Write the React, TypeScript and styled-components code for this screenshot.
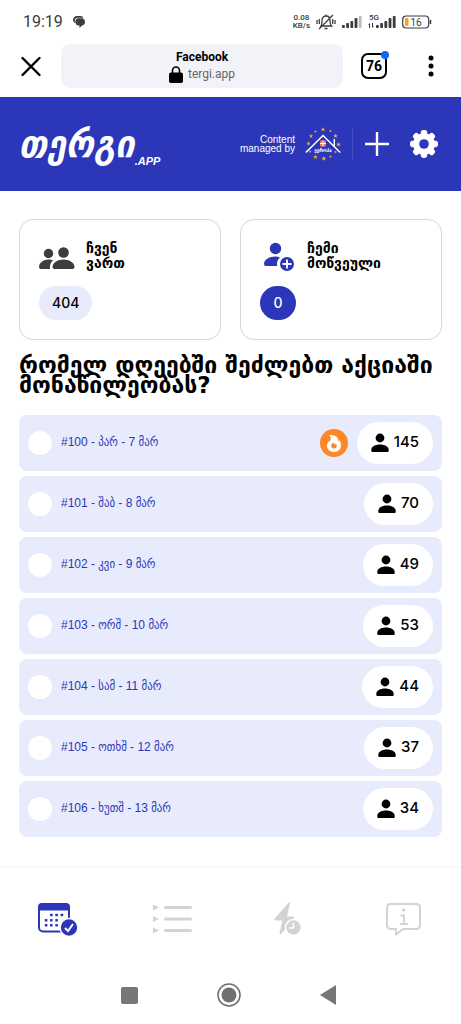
import React from "react";
import styled, { createGlobalStyle } from "styled-components";

const blue = "#2c36b8";
const pale = "#e8ebfc";
const sans = `Inter, "DejaVu Sans", sans-serif`;
const georgian = `"DejaVu Sans", sans-serif`;

const GlobalStyle = createGlobalStyle`
  * { box-sizing: border-box; }
  body { margin: 0; background: #fff; color: #000; font-family: ${sans}; }
  button { border: 0; padding: 0; margin: 0; background: none; font: inherit; color: inherit; cursor: pointer; }
  h1, h2, p, ul { margin: 0; padding: 0; font-weight: inherit; }
  svg { display: block; flex: none; }
`;

const Page = styled.div`
  display: flex;
  flex-direction: column;
  min-height: 100vh;
`;

const StatusBar = styled.div`
  display: flex;
  align-items: center;
  justify-content: space-between;
  height: 44px;
  padding: 0 29px 0 23px;
  color: #3c3c3c;
  font-family: Roboto, sans-serif;
`;

const StatusGroup = styled.div<{ $gap: number }>`
  display: flex;
  align-items: center;
  gap: ${(p) => p.$gap}px;
`;

const Clock = styled.time`
  font-size: 16px;
  line-height: 20px;
`;

const Speed = styled.div`
  font-size: 8px;
  line-height: 8px;
  font-weight: 500;
  text-align: center;
`;

const BrowserBar = styled.div`
  display: flex;
  align-items: center;
  height: 53px;
  padding: 0 23px 9px 20px;
`;

const Address = styled.button`
  display: flex;
  flex: 1;
  flex-direction: column;
  align-items: center;
  justify-content: center;
  height: 44px;
  margin: 0 18px 0 19px;
  border-radius: 9px;
  background: #f2f3f8;
  font-family: Roboto, sans-serif;
`;

const AddressTitle = styled.span`
  font-size: 12px;
  line-height: 16px;
  font-weight: 700;
`;

const AddressUrl = styled.span`
  display: flex;
  align-items: center;
  gap: 5px;
  color: #666;
  font-size: 12px;
  line-height: 18px;
`;

const TabCount = styled.button`
  position: relative;
  width: 26px;
  height: 26px;
  border: 2px solid #000;
  border-radius: 7px;
  font-family: Roboto, sans-serif;
  font-size: 14px;
  line-height: 22px;
  font-weight: 700;
`;

const TabDot = styled.span`
  position: absolute;
  top: -4px;
  right: -4px;
  width: 8px;
  height: 8px;
  border-radius: 50%;
  background: #1167f5;
`;

const MenuButton = styled.button`
  margin-left: auto;
`;

const BarEnd = styled.div`
  display: flex;
  align-items: center;
  width: 77px;
`;

const Header = styled.header`
  display: flex;
  align-items: center;
  justify-content: space-between;
  height: 94px;
  padding: 0 23px 0 19px;
  background: ${blue};
  color: #fff;
`;

const Logo = styled.a`
  display: flex;
  align-items: flex-end;
  color: #fff;
  text-decoration: none;
  font-style: italic;
  font-weight: 700;
`;

const LogoName = styled.span`
  font-family: "DejaVu Sans Condensed", "DejaVu Sans", sans-serif;
  font-size: 38px;
  line-height: 48px;
`;

const LogoSuffix = styled.span`
  font-family: "Liberation Sans", sans-serif;
  font-size: 11px;
  line-height: 14px;
`;

const HeaderTools = styled.div`
  display: flex;
  align-items: center;
`;

const Managed = styled.p`
  margin-right: 10px;
  font-family: "Liberation Sans", sans-serif;
  font-size: 10px;
  line-height: 9px;
  text-align: right;
`;

const Divider = styled.span`
  width: 1px;
  height: 32px;
  margin: 0 12px 0 11px;
  background: #4650c6;
`;

const SettingsButton = styled.button`
  margin-left: 21px;
`;

const Main = styled.main`
  flex: 1;
  padding: 28px 19px 30px;
`;

const Cards = styled.div`
  display: grid;
  grid-template-columns: 1fr 1fr;
  gap: 19px;
`;

const Card = styled.section`
  height: 121px;
  padding: 21px 19px;
  border: 1px solid #d6d6da;
  border-radius: 14px;
`;

const CardHead = styled.div`
  display: flex;
  align-items: center;
  gap: 11px;
  height: 32px;
  margin-bottom: 13px;
`;

const CardTitle = styled.h2`
  padding-bottom: 2px;
  font-family: ${georgian};
  font-size: 14px;
  line-height: 15px;
  font-weight: 700;
`;

const Pill = styled.span<{ $solid?: boolean }>`
  display: inline-flex;
  align-items: center;
  justify-content: center;
  min-width: 36px;
  height: 34px;
  padding: 0 13px 2px;
  border-radius: 17px;
  background: ${(p) => (p.$solid ? blue : pale)};
  color: ${(p) => (p.$solid ? "#fff" : "#000")};
  font-size: 14px;
  font-weight: 500;
`;

const Question = styled.h1`
  margin: 15px 0 20px;
  font-family: ${georgian};
  font-size: 23px;
  line-height: 20px;
  font-weight: 700;
`;

const Days = styled.ul`
  display: flex;
  flex-direction: column;
  gap: 5px;
  list-style: none;
`;

const Day = styled.li`
  display: flex;
  align-items: center;
  height: 56px;
  padding: 0 9px;
  border-radius: 8px;
  background: ${pale};
`;

const DayLabel = styled.label`
  display: flex;
  flex: 1;
  align-items: center;
  gap: 9px;
  color: ${blue};
  font-family: "Liberation Sans", "DejaVu Sans Condensed", "DejaVu Sans", sans-serif;
  font-size: 12px;
  line-height: 20px;
`;

const RowText = styled.span`
  padding-bottom: 3px;
`;

const DayCheck = styled.input`
  appearance: none;
  width: 24px;
  height: 24px;
  margin: 0;
  border-radius: 50%;
  background: #fff;
  &:checked { background: ${blue}; border: 5px solid #fff; }
`;

const Count = styled.span`
  display: flex;
  align-items: center;
  gap: 5px;
  height: 42px;
  margin-left: 9px;
  padding: 0 14px;
  border-radius: 21px;
  background: #fff;
  font-size: 15px;
  font-weight: 500;
`;

const Nav = styled.nav`
  display: grid;
  grid-template-columns: repeat(4, 1fr);
  place-items: center;
  height: 100px;
  padding-top: 2px;
  box-shadow: 0 0 3px #e6e6e6;
  clip-path: inset(-4px 0 0 0);
`;

const SystemBar = styled.div`
  display: flex;
  align-items: center;
  justify-content: center;
  gap: 79px;
  height: 56px;
  padding: 0 4px 2px 0;
`;

const PersonIcon = () => (
  <svg width="18" height="20" viewBox="0 0 18 20">
    <circle cx="9" cy="5" r="4.400" />
    <path d="M.3 18v-1.200c0-3.200 4-5.300 8.700-5.300s8.700 2.100 8.700 5.300V18q0 1-1 1H1.300q-1 0-1-1z" />
  </svg>
);

const FlameIcon = () => (
  <svg width="28" height="28" viewBox="0 0 28 28" role="img" aria-label="Hot">
    <circle cx="14" cy="14" r="14" fill="#fd8829" />
    <path fill="#fff" d="M9 6c4.300-.3 8.500 1 9.300 4.700l.2 1.500 1.200-.8c1.200 2.300 1.500 4.100 1.200 6.100-.5 3.600-3.500 5.500-6.900 5.500-4.200 0-7-2.600-7-6.200 0-2.900 1.800-4.600 3.600-5.600C11 9.200 10.500 7.400 9 6z" />
    <path fill="#fd8829" d="M13.600 13.500c.7 1.300.6 1.700 1.400 2.100.8-.4.600-1.200.7-1.400 1.300 1.500 1.500 3.100.6 4.300-1.100 1.500-3.500 1.500-4.600.1-1.300-1.900-.2-3.700 1.900-5.100z" />
  </svg>
);

const Signal = ({ faded }: { faded?: boolean }) => (
  <svg width="20" height="14" viewBox="0 0 20 14" fill="#3c3c3c">
    <rect x="0" y="10" width="2.800" height="3" rx=".8" />
    <rect x="4.200" y="8" width="2.800" height="5" rx=".8" />
    <rect x="8.400" y="6" width="2.800" height="7" rx=".8" />
    <rect x="12.600" y="3" width="2.800" height="10" rx=".8" />
    <rect x="16.800" y="1" width="2.800" height="12" rx=".8" fill={faded ? "#bbb" : "#3c3c3c"} />
  </svg>
);

const stars = [
  [18, 2.5, 1.1], [25.5, 4, 0.7], [30.5, 9, 1.1], [33.500, 17.500, 1.1], [30.500, 25, 0.7], [25.500, 29.500, 0.7],
  [18.800, 31.500, 1.2], [10.500, 30, 1.1], [5, 24.500, 0.7], [3.500, 16.500, 1], [6, 9, 1], [10.500, 4.500, 0.7],
];

const HouseBadge = () => (
  <svg width="36" height="34" viewBox="0 0 36 34" role="img" aria-label="ევროპული სახლი">
    {stars.map(([x, y, s], i) => (
      <path
        key={i}
        fill="#e8a83c"
        transform={`translate(${x} ${y}) scale(${s})`}
        d="M0-2.300.6-.7H2.200L.9.3 1.400 1.900 0 .9-1.400 1.900-.9.3-2.200-.7H-.6z"
      />
    ))}
    <path d="M.8 25.500 18 8.500l17.200 17M29.300 19v-7" fill="none" stroke="#fff" strokeWidth="1.500" />
    <rect x="15" y="13.500" width="6" height="6" fill="#e97652" />
    <path d="M18 13.500v6M15 16.500h6" stroke="#fff" strokeWidth="1" />
    <text x="18" y="25" textAnchor="middle" fill="#fff" fontFamily="DejaVu Sans Condensed, DejaVu Sans" fontSize="5" fontWeight="700">ევროპა</text>
  </svg>
);

const GearIcon = () => (
  <svg width="28" height="28" viewBox="0 0 28 28">
    <g fill="#fff">
      {[0, 45, 90, 135].map((a) => (
        <rect key={a} x="10.800" y="0" width="6.400" height="28" rx="2.400" transform={`rotate(${a} 14 14)`} />
      ))}
      <circle cx="14" cy="14" r="10.800" />
    </g>
    <circle cx="14" cy="14" r="4.800" fill={blue} />
  </svg>
);

const calendarDots = [
  [13, 12.7], [18.300, 12.7], [23.600, 12.7],
  [7.800, 18], [13, 18], [18.300, 18],
  [7.800, 23], [13, 23], [18.300, 23],
];

const days = [
  { id: 100, day: "პარ", date: 7, count: 145, hot: true },
  { id: 101, day: "შაბ", date: 8, count: 70 },
  { id: 102, day: "კვი", date: 9, count: 49 },
  { id: 103, day: "ორშ", date: 10, count: 53 },
  { id: 104, day: "სამ", date: 11, count: 44 },
  { id: 105, day: "ოთხშ", date: 12, count: 37 },
  { id: 106, day: "ხუთშ", date: 13, count: 34 },
];

export default function App() {
  return (
    <Page>
      <GlobalStyle />
      <StatusBar>
        <StatusGroup $gap={10}>
          <Clock>19:19</Clock>
          <svg width="12" height="12" viewBox="0 0 12 12" fill="#3c3c3c">
            <path d="M4 0h3.500C9 0 10 .8 10.500 1.800H5C2.700 1.800 1.800 3.200 1.800 5v2C.6 6.300 0 5.200 0 4c0-2.200 1.800-4 4-4z" />
            <path d="M5.500 2.300h3C10.600 2.300 12 4 12 5.900s-1.400 3.300-3 3.500L6.500 12V9.400h-1C3.700 9.400 2.300 8 2.300 6s1.400-3.700 3.200-3.700z" />
          </svg>
        </StatusGroup>
        <StatusGroup $gap={6}>
          <Speed>0.08<br />KB/s</Speed>
          <svg width="20" height="18" viewBox="0 0 20 18" fill="none" stroke="#3c3c3c" strokeWidth="1.300">
            <path d="M5 13h10.500c-1.400-1.300-1.500-3-1.500-5.500C14 4.800 12.500 3 10 3S6 4.800 6 7.500c0 2.500 0 4-1 5.500zM3 16 17 2M8.500 15.500h3M1 7v4M3.300 6v5M19 7v4M16.700 6v5M10 1.500V3" />
          </svg>
          <Signal faded />
          <svg width="28" height="18" viewBox="0 0 28 18" fill="#3c3c3c">
            <text x="1" y="7" fontFamily="Roboto, sans-serif" fontSize="8" fontWeight="500">5G</text>
            <path d="m0 12 2-2v5H1v-3zM5 10v3h1l-2 2v-5z" />
            <rect x="8" y="12" width="2.800" height="3" rx=".8" />
            <rect x="12.200" y="10" width="2.800" height="5" rx=".8" />
            <rect x="16.400" y="8" width="2.800" height="7" rx=".8" />
            <rect x="20.600" y="5" width="2.800" height="10" rx=".8" />
            <rect x="24.800" y="3" width="2.800" height="12" rx=".8" />
          </svg>
          <svg width="30" height="14" viewBox="0 0 30 14">
            <rect x=".7" y="1" width="26" height="12" rx="3.500" fill="none" stroke="#3c3c3c" strokeWidth="1.200" />
            <rect x="3" y="3" width="3.500" height="8" rx="1" fill="#f3a51f" />
            <path d="M28.500 5v4" stroke="#3c3c3c" strokeWidth="1.500" />
            <text x="8.500" y="10.500" fontFamily="Roboto, sans-serif" fontSize="10" fill="#3c3c3c">16</text>
          </svg>
        </StatusGroup>
      </StatusBar>

      <BrowserBar>
        <button aria-label="Close">
          <svg width="22" height="22" viewBox="0 0 22 22" stroke="#000" strokeWidth="2.400" strokeLinecap="round">
            <path d="m2.500 3 17 17m0-17-17 17" />
          </svg>
        </button>
        <Address>
          <AddressTitle>Facebook</AddressTitle>
          <AddressUrl>
            <svg width="14" height="17" viewBox="0 0 14 17">
              <path d="M3.500 8V4.500a3.500 3.500 0 0 1 7 0V8" fill="none" stroke="#000" strokeWidth="1.600" />
              <rect y="6.500" width="14" height="10.500" rx="2" />
            </svg>
            tergi.app
          </AddressUrl>
        </Address>
        <BarEnd>
          <TabCount>76<TabDot /></TabCount>
          <MenuButton aria-label="Menu">
            <svg width="14" height="24" viewBox="0 0 14 24">
              <circle cx="7" cy="4" r="2.500" /><circle cx="7" cy="12" r="2.500" /><circle cx="7" cy="20" r="2.500" />
            </svg>
          </MenuButton>
        </BarEnd>
      </BrowserBar>

      <Header>
        <Logo href="#">
          <LogoName>თერგი</LogoName>
          <LogoSuffix>.APP</LogoSuffix>
        </Logo>
        <HeaderTools>
          <Managed>Content<br />managed by</Managed>
          <HouseBadge />
          <Divider />
          <button aria-label="Add">
            <svg width="24" height="24" viewBox="0 0 24 24" stroke="#fff" strokeWidth="2.400">
              <path d="M12 0v24M0 12h24" />
            </svg>
          </button>
          <SettingsButton aria-label="Settings"><GearIcon /></SettingsButton>
        </HeaderTools>
      </Header>

      <Main>
        <Cards>
          <Card>
            <CardHead>
              <svg width="36" height="28" viewBox="0 0 36 28" fill="#3d3d3d">
                <circle cx="9.500" cy="10.500" r="4.700" />
                <path d="M14.500 17.200c-2.600 1.400-3.600 4-3.500 8.800H2q-2 0-2-2c0-4.300 4.500-7.500 9.500-7.500 2 0 3.500.200 5 .7z" />
                <circle cx="24.500" cy="9.500" r="5.300" />
                <path d="M24.500 16.500c6 0 11 3.300 11 7.500q0 2-2 2h-18q-2 0-2-2c0-4.200 5-7.500 11-7.500z" />
              </svg>
              <CardTitle>ჩვენ<br />ვართ</CardTitle>
            </CardHead>
            <Pill>404</Pill>
          </Card>
          <Card>
            <CardHead>
              <svg width="36" height="32" viewBox="0 0 36 32" fill={blue}>
                <circle cx="15.500" cy="7.500" r="5.700" />
                <path d="M20 16.700c-2.500 1.700-3.600 4.800-2.800 8.300H6q-2 0-2-2c0-4.300 5-7.500 11.500-7.500 1.700 0 3.200.3 4.500 1.200z" />
                <circle cx="27" cy="23" r="7" />
                <path d="M27 18.500v9M22.500 23h9" stroke="#fff" strokeWidth="1.800" />
              </svg>
              <CardTitle>ჩემი<br />მოწვეული</CardTitle>
            </CardHead>
            <Pill $solid>0</Pill>
          </Card>
        </Cards>

        <Question>რომელ დღეებში შეძლებთ აქციაში მონაწილეობას?</Question>

        <Days>
          {days.map((d) => (
            <Day key={d.id}>
              <DayLabel>
                <DayCheck type="checkbox" />
                <RowText>{`#${d.id} - ${d.day} - ${d.date} მარ`}</RowText>
              </DayLabel>
              {d.hot && <FlameIcon />}
              <Count><PersonIcon /><RowText>{d.count}</RowText></Count>
            </Day>
          ))}
        </Days>
      </Main>

      <Nav>
        <button aria-label="Calendar">
          <svg width="42" height="36" viewBox="0 0 42 36" fill={blue}>
            <rect x="2" y="3" width="30" height="27.500" rx="4" fill="none" stroke={blue} strokeWidth="2" />
            <path d="M1 9.500V6q0-4 4-4h24q4 0 4 4v3.500z" />
            {calendarDots.map(([x, y]) => (
              <rect key={`${x}-${y}`} x={x} y={y} width="2.600" height="2.600" rx=".6" />
            ))}
            <circle cx="32" cy="26.500" r="9" stroke="#fff" strokeWidth="1.600" />
            <path d="m28 27 3 3 5-7" fill="none" stroke="#fff" strokeWidth="2" />
          </svg>
        </button>
        <button aria-label="List">
          <svg width="39" height="30" viewBox="0 0 39 30" fill="#d3d3d3">
            {[3.500, 15, 26.500].map((y) => (
              <g key={y}>
                <path d={`M0 ${y - 3}l6 3-6 3z`} />
                <rect x="11" y={y - 1.500} width="28" height="3" rx="1.500" />
              </g>
            ))}
          </svg>
        </button>
        <button aria-label="Activity">
          <svg width="28" height="34" viewBox="0 0 28 34" fill="#d3d3d3">
            <path d="M14.500.8.600 16.800q-1 1.700 1 1.700h6.900L5.500 31q0 2.500 2 .7L20 16q1-1.500-1-1.500h-6l3-13q0-1.700-1.500-.7z" />
            <circle cx="19.500" cy="25.500" r="8" stroke="#fff" strokeWidth="1.600" />
            <path d="M19.500 20.500V26H15" fill="none" stroke="#fff" strokeWidth="1.400" />
          </svg>
        </button>
        <button aria-label="Information">
          <svg width="37" height="36" viewBox="0 0 37 36" fill="none" stroke="#d3d3d3" strokeWidth="2">
            <path strokeLinejoin="round" d="M6 3h25q4 0 4 4v17q0 4-4 4H18l-7 5.500V28H6q-4 0-4-4V7q0-4 4-4z" />
            <path d="M15.500 14.500H19V23M15 23h8" />
            <circle cx="18.500" cy="9" r="1.700" fill="#d3d3d3" stroke="none" />
          </svg>
        </button>
      </Nav>

      <SystemBar>
        <button aria-label="Recent apps">
          <svg width="17" height="17" viewBox="0 0 17 17"><rect width="17" height="17" rx="2" fill="#777" /></svg>
        </button>
        <button aria-label="Home">
          <svg width="24" height="24" viewBox="0 0 24 24">
            <circle cx="12" cy="12" r="11" fill="none" stroke="#707070" strokeWidth="1.600" />
            <circle cx="12" cy="12" r="7.500" fill="#707070" />
          </svg>
        </button>
        <button aria-label="Back">
          <svg width="17" height="20" viewBox="0 0 17 20"><path d="M16 0v20L0 10z" fill="#777" /></svg>
        </button>
      </SystemBar>
    </Page>
  );
}
